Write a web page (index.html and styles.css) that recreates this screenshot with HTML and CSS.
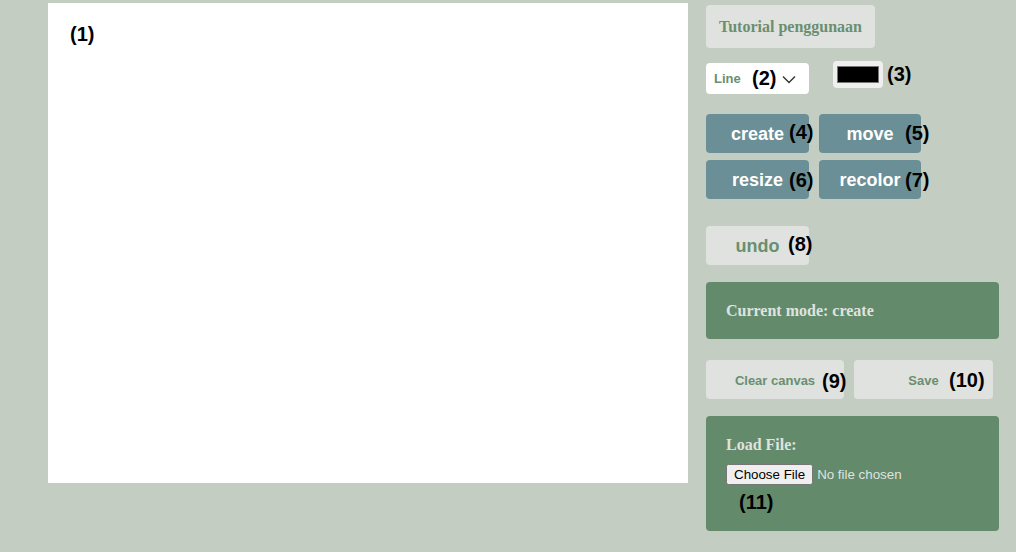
FILE: index.html
```html
<!DOCTYPE html>
<html>
<head>
<meta charset="utf-8">
<link rel="stylesheet" href="styles.css">
</head>
<body>
<div class="app">
  <div class="canvas">
    <span class="tag tag-canvas">(1)</span>
  </div>
  <div class="sidebar">
    <button class="btn-light tutorial">Tutorial penggunaan</button>
    <div class="tool-row">
      <div class="select">
        <span class="select-text">Line</span>
        <span class="tag-inline">(2)</span>
        <svg class="chevron" width="14" height="9" viewBox="0 0 14 9"><path d="M1 1.5 L7 7.5 L13 1.5" fill="none" stroke="#333" stroke-width="1.4"/></svg>
      </div>
      <div class="color-wrap">
        <div class="color-input"><div class="color-swatch"></div></div>
        <span class="tag-inline">(3)</span>
      </div>
    </div>
    <div class="mode-grid">
      <button class="btn-mode">create<span class="tag tag-btn">(4)</span></button>
      <button class="btn-mode">move<span class="tag tag-btn tag-right tag-r1">(5)</span></button>
      <button class="btn-mode">resize<span class="tag tag-btn tag-r2">(6)</span></button>
      <button class="btn-mode">recolor<span class="tag tag-btn tag-right tag-r2">(7)</span></button>
    </div>
    <button class="btn-light undo">undo<span class="tag tag-undo">(8)</span></button>
    <div class="panel mode-panel">Current mode: create</div>
    <div class="actions">
      <button class="btn-light action clear">Clear canvas<span class="tag tag-clear">(9)</span></button>
      <button class="btn-light action save">Save<span class="tag tag-save">(10)</span></button>
    </div>
    <div class="panel load-panel">
      <div class="load-title">Load File:</div>
      <input class="file" type="file">
      <div class="tag-load">(11)</div>
    </div>
  </div>
</div>
</body>
</html>
```

FILE: styles.css
```css
html, body {
  margin: 0;
  padding: 0;
  background: #c4cdc2;
  font-family: "Liberation Sans", Arial, sans-serif;
}
.app {
  display: flex;
  align-items: flex-start;
  gap: 18px;
  padding: 3px 0 0 48px;
}
.canvas {
  position: relative;
  width: 640px;
  height: 480px;
  background: #ffffff;
  flex: none;
}
.tag {
  position: absolute;
  font-family: "Liberation Sans", Arial, sans-serif;
  font-weight: bold;
  font-size: 20px;
  line-height: 22px;
  color: #000;
}
.tag-canvas {
  left: 22px;
  top: 20px;
}
.sidebar {
  width: 293px;
  display: flex;
  flex-direction: column;
  align-items: flex-start;
  padding-top: 2px;
}
button {
  border: none;
  margin: 0;
  cursor: pointer;
  position: relative;
}
.btn-light {
  background: #e0e2df;
  color: #6a8f6f;
  border-radius: 4px;
}
.tutorial {
  font-family: "Liberation Serif", "Times New Roman", serif;
  font-weight: bold;
  font-size: 16px;
  height: 43px;
  width: 169px;
  padding: 0;
}
.tool-row {
  display: flex;
  align-items: flex-start;
  margin-top: 15px;
  gap: 24px;
}
.select {
  width: 103px;
  height: 31px;
  box-sizing: border-box;
  background: #fff;
  border-radius: 4px;
  display: flex;
  align-items: center;
  padding-left: 8px;
}
.select-text {
  font-weight: bold;
  font-size: 13px;
  color: #6a8f6f;
  width: 38px;
}
.tag-inline {
  font-weight: bold;
  font-size: 20px;
  color: #000;
}
.chevron {
  margin-left: 6px;
  margin-top: 1px;
}
.color-wrap {
  display: flex;
  align-items: center;
  gap: 4px;
  margin-top: -2px;
}
.color-input {
  width: 50px;
  height: 27px;
  box-sizing: border-box;
  background: #efefef;
  border-radius: 4px;
  padding: 5px 4px;
}
.color-swatch {
  width: 100%;
  height: 100%;
  box-sizing: border-box;
  background: #000;
  border: 1px solid #777;
}
.mode-grid {
  display: grid;
  grid-template-columns: 103px 102px;
  column-gap: 10px;
  row-gap: 7px;
  margin-top: 20px;
}
.btn-mode {
  height: 39px;
  background: #6a8f96;
  color: #fff;
  border-radius: 4px;
  font-family: "Liberation Sans", Arial, sans-serif;
  font-weight: bold;
  font-size: 18px;
  padding: 2px 0 0;
}
.tag-btn {
  left: 83px;
  top: 7px;
}
.tag-right {
  left: 86px;
}
.tag-r1 {
  top: 8px;
}
.tag-r2 {
  top: 9px;
}
.undo {
  margin-top: 27px;
  width: 103px;
  height: 39px;
  font-family: "Liberation Sans", Arial, sans-serif;
  font-weight: bold;
  font-size: 18px;
  padding: 2px 0 0;
}
.tag-undo {
  left: 82px;
  top: 7px;
}
.panel {
  background: #648a6c;
  border-radius: 4px;
  width: 293px;
  box-sizing: border-box;
  padding: 0 20px;
  color: #dfe3df;
  font-family: "Liberation Serif", "Times New Roman", serif;
  font-weight: bold;
  font-size: 16px;
}
.mode-panel {
  margin-top: 17px;
  height: 57px;
  line-height: 57px;
}
.actions {
  display: flex;
  gap: 10px;
  margin-top: 21px;
}
.action {
  height: 39px;
  font-family: "Liberation Sans", Arial, sans-serif;
  font-weight: bold;
  font-size: 13px;
  padding: 2px 0 0;
}
.clear {
  width: 138px;
}
.save {
  width: 139px;
}
.tag-clear {
  left: 116px;
  top: 10px;
}
.tag-save {
  left: 95px;
  top: 9px;
}
.load-panel {
  margin-top: 17px;
  height: 115px;
  padding-top: 19px;
}
.load-title {
  line-height: 19px;
}
.file {
  display: block;
  margin-top: 10px;
  font-family: "Liberation Sans", Arial, sans-serif;
  font-size: 13.33px;
  font-weight: normal;
  color: #dfe3df;
}
.tag-load {
  margin: 6px 0 0 13px;
  font-family: "Liberation Sans", Arial, sans-serif;
  font-weight: bold;
  font-size: 20px;
  line-height: 22px;
  color: #000;
}
```
